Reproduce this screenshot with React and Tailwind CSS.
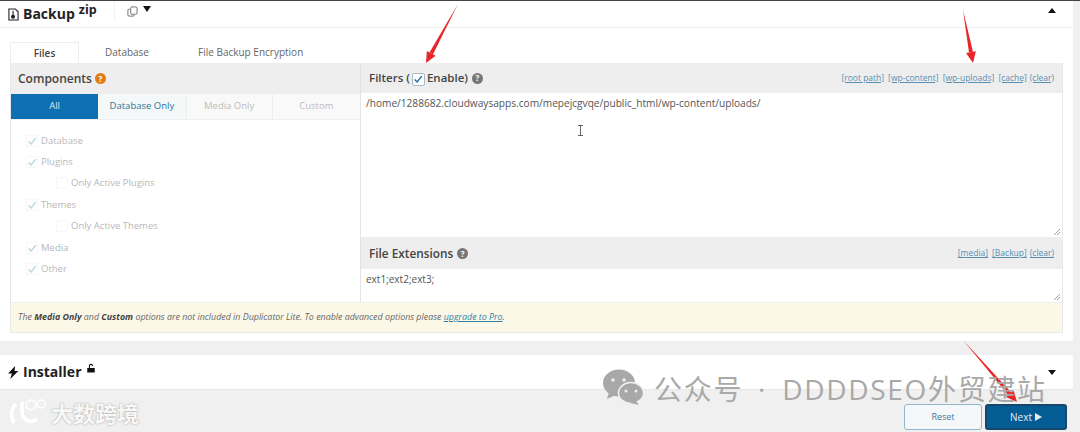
import React from "react";

const checks = [
  { label: "Database", checked: true },
  { label: "Plugins", checked: true },
  { label: "Only Active Plugins", sub: true },
  { label: "Themes", checked: true },
  { label: "Only Active Themes", sub: true },
  { label: "Media", checked: true },
  { label: "Other", checked: true },
];

function Help({ className }) {
  return (
    <span className={`inline-flex h-[11px] w-[11px] items-center justify-center rounded-full text-[8px] font-bold leading-none text-white ${className}`}>
      ?
    </span>
  );
}

function Tick({ className }) {
  return (
    <svg viewBox="0 0 12 12" className={className} fill="none" stroke="currentColor" strokeWidth="1.6">
      <path d="M2 6.500 5 9.500 10.500 2.500" />
    </svg>
  );
}

function Resize() {
  return (
    <svg viewBox="0 0 8 8" className="absolute bottom-[1px] right-[1px] h-2 w-2 text-[#888]" fill="none" stroke="currentColor" strokeWidth="0.8">
      <path d="M7 1 1 7M7 4 4 7" />
    </svg>
  );
}

function Arrow({ x1, y1, x2, y2 }) {
  const a = Math.atan2(y2 - y1, x2 - x1);
  const bx = x2 - Math.cos(a) * 11;
  const by = y2 - Math.sin(a) * 11;
  const nx = -Math.sin(a) * 5;
  const ny = Math.cos(a) * 5;
  return (
    <>
      <polygon points={`${x1},${y1} ${bx + nx * 0.4},${by + ny * 0.4} ${bx - nx * 0.4},${by - ny * 0.4}`} fill="#e8262a" />
      <polygon points={`${x2},${y2} ${bx + nx},${by + ny} ${bx - nx},${by - ny}`} fill="#e8262a" />
    </>
  );
}

export default function App() {
  return (
    <div className="relative flex h-[432px] w-[1080px] flex-col overflow-hidden bg-[#f0f0f1] font-['Open_Sans','Noto_Sans_CJK_SC',sans-serif] text-[#50575e]">
      <div className="h-[1px] bg-[#444]" />

      {/* Backup panel */}
      <div className="mr-[7px] h-[340px] bg-white">
        <div className="flex h-[27px] items-center border-b border-[#eee] pl-[8px] pr-[17px]">
          <svg viewBox="0 0 12 14" className="h-[13px] w-[11px] text-[#222]" fill="none" stroke="currentColor" strokeWidth="1.2">
            <path d="M1 1h7l3 3v9H1z" />
            <circle cx="5.500" cy="9.500" r="1.600" fill="currentColor" />
            <path d="M5.500 3v5" />
          </svg>
          <span className="ml-[4px] text-[14px] font-bold leading-none text-[#222]">Backup</span>
          <span className="mb-[8px] ml-[4px] text-[12.500px] font-bold leading-none text-[#222]">zip</span>
          <div className="ml-[17px] h-[20px] w-[1px] self-start bg-[#f2f2f2]" />
          <svg viewBox="0 0 12 12" className="mb-[5px] ml-[12px] h-[11px] w-[11px] text-[#666]" fill="none" stroke="currentColor" strokeWidth="1">
            <rect x="4" y="1" width="7" height="8" rx="1.500" />
            <path d="M3 3.500H2a1 1 0 0 0-1 1V10a1 1 0 0 0 1 1h5a1 1 0 0 0 1-1" />
          </svg>
          <div className="mb-[10px] ml-[5px] h-0 w-0 border-x-[4px] border-t-[6px] border-x-transparent border-t-[#111]" />
          <div className="mb-[7px] ml-auto h-0 w-0 border-x-[4px] border-b-[5px] border-x-transparent border-b-[#111]" />
        </div>

        {/* Tabs */}
        <div className="ml-[10px] mt-[14px] flex h-[21px] text-[10px]">
          <div className="flex w-[69px] items-center justify-center border border-b-0 border-[#eee] font-semibold text-[#444]">Files</div>
          <div className="flex w-[96px] items-center justify-center text-[#666]">Database</div>
          <div className="flex items-center pl-[23px] text-[#666]">File Backup Encryption</div>
        </div>

        <div className="mx-[10px] flex h-[270px] flex-col border border-t-0 border-[#e8e8e8]">
          <div className="flex h-[239px]">
            {/* Components */}
            <div className="flex w-[350px] flex-col border-r border-[#e4e4e4]">
              <div className="flex h-[31px] items-center gap-[3px] bg-[#eeeeee] pl-[7px]">
                <span className="text-[12px] font-semibold text-[#444]">Components</span>
                <Help className="bg-[#e07b16]" />
              </div>
              <div className="grid h-[26px] grid-cols-4 border-b border-[#eeeeee] text-[9.500px]">
                <div className="flex items-center justify-center bg-[#0f6fb3] text-[#d6e8f4]">All</div>
                <div className="flex items-center justify-center bg-[#f5f8f9] text-[#2c7397]">Database Only</div>
                <div className="flex items-center justify-center border-x border-[#eee] bg-[#f9f9f9] text-[#bbbbbb]">Media Only</div>
                <div className="flex items-center justify-center bg-[#f9f9f9] text-[#bbbbbb]">Custom</div>
              </div>
              <div className="flex flex-col pt-[10px]">
                {checks.map((c) => (
                  <div key={c.label} className={`flex h-[21.400px] items-center text-[9.500px] text-[#b8b8b8] ${c.sub ? "pl-[45px]" : "pl-[15px]"}`}>
                    <span className="mr-[3px] flex h-[12px] w-[12px] items-center justify-center rounded-[2px] border border-[#f7f7f7]">
                      {c.checked && <Tick className="h-[10px] w-[10px] text-[#b5d5e5]" />}
                    </span>
                    {c.label}
                  </div>
                ))}
              </div>
            </div>

            <div className="flex flex-1 flex-col">
              {/* Filters */}
              <div className="flex h-[30px] items-center bg-[#eeeeee] pl-[8px] pr-[8px]">
                <span className="text-[11.500px] font-semibold text-[#444]">Filters (</span>
                <span className="mx-[2px] mt-[2px] flex h-[13px] w-[13px] items-center justify-center rounded-[2px] border border-[#a9bac6] bg-white">
                  <Tick className="h-[10px] w-[10px] text-[#1a6aa6]" />
                </span>
                <span className="text-[11.500px] font-semibold text-[#444]">Enable)</span>
                <Help className="ml-[4px] bg-[#777]" />
                <span className="ml-auto text-[8.500px] text-[#5a8fb2] underline">[root path]</span>
                <span className="ml-[4px] text-[8.500px] text-[#5a8fb2] underline">[wp-content]</span>
                <span className="ml-[4px] text-[8.500px] text-[#5a8fb2] underline">[wp-uploads]</span>
                <span className="ml-[4px] text-[8.500px] text-[#5a8fb2] underline">[cache]</span>
                <span className="ml-[3px] text-[8.500px] text-[#5a8fb2] underline">(clear)</span>
              </div>
              <div className="relative h-[145px] border-b border-[#eee] pl-[5px] pt-[3px] text-[10.150px] text-[#555]">
                /home/1288682.cloudwaysapps.com/mepejcgvqe/public_html/wp-content/uploads/
                <svg viewBox="0 0 7 11" className="absolute left-[216px] top-[32px] h-[11px] w-[7px] text-[#555]" fill="none" stroke="currentColor" strokeWidth="0.9">
                  <path d="M1 .5h5M3.500.5v10M1 10.500h5" />
                </svg>
                <Resize />
              </div>

              {/* File extensions */}
              <div className="flex h-[31px] items-center bg-[#eeeeee] pl-[8px] pr-[8px]">
                <span className="text-[11.800px] font-semibold text-[#444]">File Extensions</span>
                <Help className="ml-[4px] bg-[#777]" />
                <span className="ml-auto text-[8.500px] text-[#5a8fb2] underline">[media]</span>
                <span className="ml-[4px] text-[8.500px] text-[#5a8fb2] underline">[Backup]</span>
                <span className="ml-[3px] text-[8.500px] text-[#5a8fb2] underline">(clear)</span>
              </div>
              <div className="relative flex-1 pl-[5px] pt-[3px] text-[10px] text-[#555]">
                ext1;ext2;ext3;
                <Resize />
              </div>
            </div>
          </div>

          <div className="flex flex-1 items-center border-t border-[#eee] bg-[#fbf8e8] pl-[7px] text-[8.870px] italic text-[#666]">
            <span>
              The <b className="text-[#444]">Media Only</b> and <b className="text-[#444]">Custom</b> options are not included in Duplicator Lite. To enable advanced options please{" "}
              <span className="text-[#2f7fa5] underline">upgrade to Pro</span>.
            </span>
          </div>
        </div>
      </div>

      {/* Installer panel */}
      <div className="mr-[7px] mt-[14px] flex h-[35px] items-center border-b border-[#e8e8e8] bg-white pl-[8px] pr-[17px]">
        <svg viewBox="0 0 10 12" className="h-[13px] w-[11px] text-[#111]" fill="currentColor">
          <path d="M6.500 0 0 7h3.500L2 12l7.500-7.500H6z" />
        </svg>
        <span className="ml-[4px] text-[14px] font-bold leading-none text-[#222]">Installer</span>
        <svg viewBox="0 0 12 12" className="mb-[8px] ml-[4px] h-[10px] w-[10px] text-[#111]" fill="currentColor">
          <path d="M1.500 6h9v5.500h-9zM3.500 6V3.500a2.500 2.500 0 0 1 5 0H7.200a1.200 1.200 0 0 0-2.400 0V6z" />
        </svg>
        <div className="ml-auto h-0 w-0 border-x-[4px] border-t-[5px] border-x-transparent border-t-[#111]" />
      </div>

      {/* Footer buttons */}
      <div className="flex flex-1 items-end justify-end gap-[3px] pb-[2px] pr-[13px]">
        <div className="flex h-[26px] w-[78px] items-center justify-center rounded-[3px] border border-[#8fb8cc] bg-[#f5f8f9] text-[9px] text-[#3b7a9c]">Reset</div>
        <div className="flex h-[26px] w-[82px] items-center justify-center gap-[3px] rounded-[3px] border-2 border-[#15466b] bg-[#045c94] text-[10px] text-[#e4eef5]">
          Next
          <div className="h-0 w-0 border-y-[4px] border-l-[7px] border-y-transparent border-l-[#e4eef5]" />
        </div>
      </div>

      {/* Watermarks and annotation arrows over the screenshot */}
      <svg className="pointer-events-none absolute left-0 top-0 h-[432px] w-[1080px]" viewBox="0 0 1080 432">
        <Arrow x1={458} y1={4} x2={426} y2={63} />
        <Arrow x1={963} y1={10} x2={973} y2={63} />
        <Arrow x1={963} y1={340} x2={1017} y2={402} />
        <ellipse cx="619" cy="383" rx="16" ry="13.500" fill="#a8a8a8" />
        <path d="M609 392 607 399 616 395z" fill="#a8a8a8" />
        <ellipse cx="631" cy="393" rx="12.500" ry="10.500" fill="#a8a8a8" stroke="#f0f0f0" strokeWidth="1.500" />
        <path d="M636 401 639 405 630 403z" fill="#a8a8a8" />
        <circle cx="613" cy="380" r="1.800" fill="#eee" />
        <circle cx="624" cy="380" r="1.800" fill="#eee" />
        <circle cx="626" cy="391" r="1.500" fill="#eee" />
        <circle cx="636" cy="391" r="1.500" fill="#eee" />
        <path d="M16 404c-5 5-6 12-2 19M22 402v9c0 9 8 13 15 8" fill="none" stroke="#fff" strokeWidth="3.500" />
        <circle cx="31" cy="405" r="5" fill="none" stroke="#fff" strokeWidth="1.500" />
        <circle cx="41" cy="404" r="4" fill="none" stroke="#fff" strokeWidth="1.500" />
      </svg>
      <div className="pointer-events-none absolute left-[654px] top-[371px] whitespace-nowrap text-[28px] leading-[36px] tracking-[1.700px] text-[#a9a9a9]">
        公众号<span className="mx-[6px]"> · </span>DDDDSEO外贸建站
      </div>
      <div className="pointer-events-none absolute left-[51px] top-[399px] whitespace-nowrap text-[22px] font-bold leading-[28px] text-[#f8f8f8] [text-shadow:0_0_2px_#999]">
        大数跨境
      </div>
    </div>
  );
}
